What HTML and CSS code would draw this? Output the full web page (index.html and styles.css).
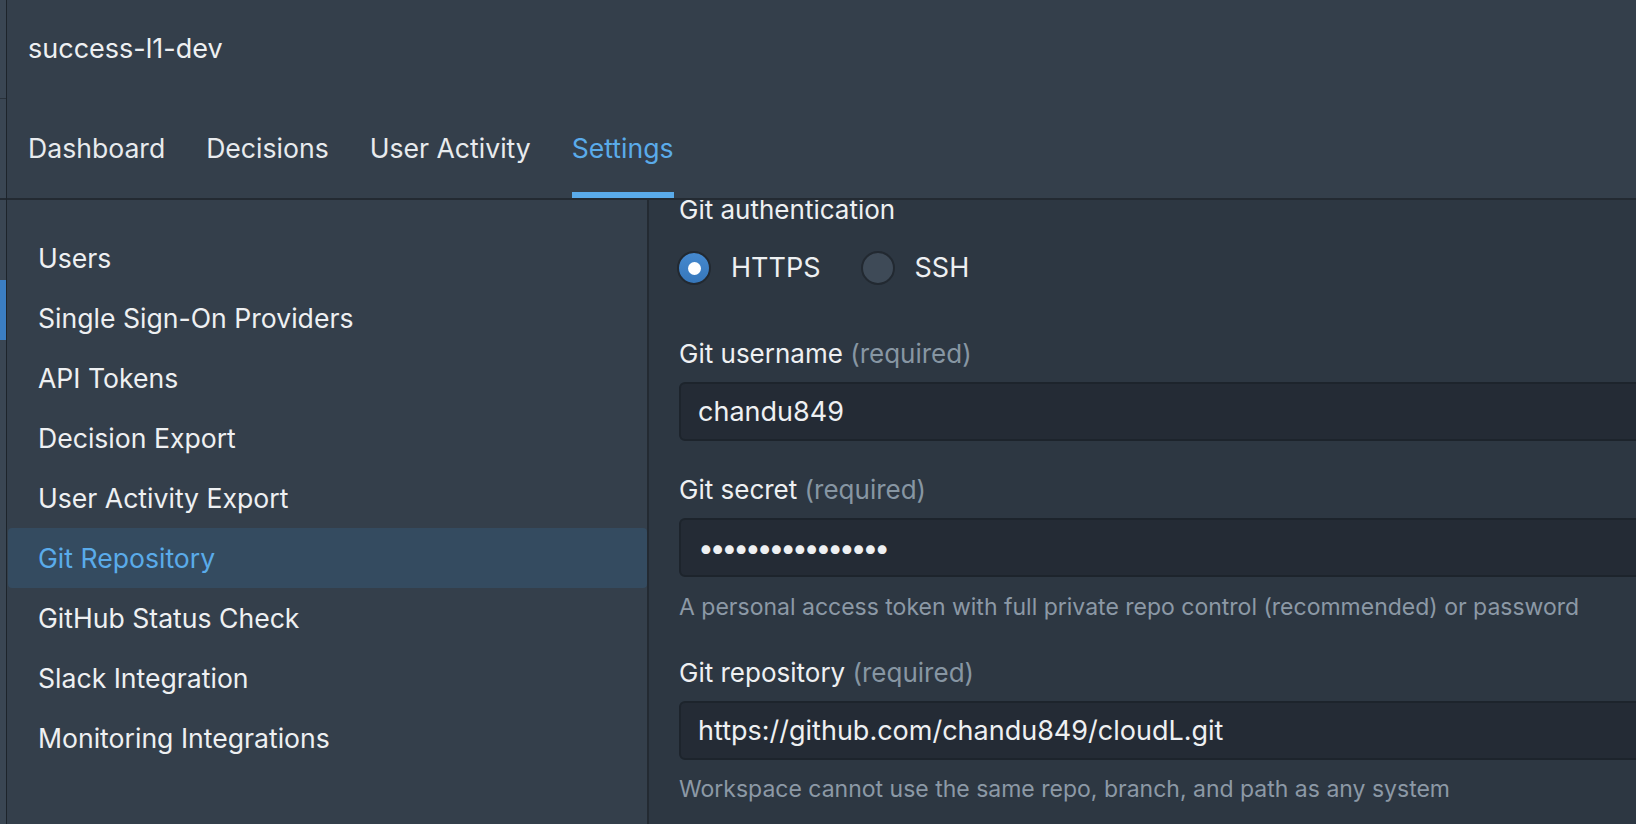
FILE: index.html
```html
<!DOCTYPE html>
<html lang="en">
<head>
<meta charset="utf-8">
<title>success-l1-dev · Settings</title>
<link rel="stylesheet" href="styles.css">
</head>
<body>
<div class="app">
  <div class="rail">
    <div class="rail-seg rail-top"></div>
    <div class="rail-seg rail-mid"></div>
    <div class="rail-gap"></div>
    <div class="rail-active"></div>
  </div>
  <div class="main">
    <header class="header">
      <div class="title">success-l1-dev</div>
      <nav class="tabs">
        <span class="tab">Dashboard</span>
        <span class="tab">Decisions</span>
        <span class="tab">User Activity</span>
        <span class="tab active">Settings</span>
      </nav>
    </header>
    <div class="body">
      <aside class="sidebar">
        <div class="item">Users</div>
        <div class="item">Single Sign-On Providers</div>
        <div class="item">API Tokens</div>
        <div class="item">Decision Export</div>
        <div class="item">User Activity Export</div>
        <div class="item selected">Git Repository</div>
        <div class="item">GitHub Status Check</div>
        <div class="item">Slack Integration</div>
        <div class="item">Monitoring Integrations</div>
      </aside>
      <section class="content">
        <div class="label first">Git authentication</div>
        <div class="radios">
          <label class="radio-opt"><span class="radio on"></span><span class="radio-text">HTTPS</span></label>
          <label class="radio-opt"><span class="radio"></span><span class="radio-text">SSH</span></label>
        </div>

        <div class="label l-user">Git username <span class="req">(required)</span></div>
        <div class="input">chandu849</div>

        <div class="label l-secret">Git secret <span class="req">(required)</span></div>
        <div class="input secret">••••••••••••••••</div>
        <div class="hint">A personal access token with full private repo control (recommended) or password</div>

        <div class="label l-repo">Git repository <span class="req">(required)</span></div>
        <div class="input">https://github.com/chandu849/cloudL.git</div>
        <div class="hint">Workspace cannot use the same repo, branch, and path as any system</div>
      </section>
    </div>
  </div>
</div>
</body>
</html>
```

FILE: styles.css
```css
* { box-sizing: border-box; }

html, body {
  margin: 0;
  padding: 0;
  height: 100%;
  overflow: hidden;
}

body {
  background: #2d3742;
  color: #e8ebee;
  font-family: "Inter", "Noto Sans", "DejaVu Sans", sans-serif;
}

.app {
  display: flex;
  height: 824px;
}

/* left rail of the neighbouring navigation */
.rail {
  width: 7px;
  flex: 0 0 7px;
  background: #3a4653;
  border-right: 1px solid #1d242b;
  display: flex;
  flex-direction: column;
}
.rail-seg { flex: 0 0 auto; }
.rail-top { height: 99px; border-bottom: 1px solid #29313a; }
.rail-mid { height: 101px; border-bottom: 2px solid #232a32; }
.rail-gap { height: 80px; }
.rail-active { height: 60px; background: #3b7ec2; }

.main {
  flex: 1;
  display: flex;
  flex-direction: column;
  min-width: 0;
}

/* header */
.header {
  height: 200px;
  flex: 0 0 200px;
  background: #343f4b;
  border-bottom: 2px solid #232a32;
  padding: 29px 0 0 21px;
  display: flex;
  flex-direction: column;
}
.title {
  font-size: 27px;
  line-height: 40px;
  color: #eef0f2;
}
.tabs {
  display: flex;
  gap: 41px;
  margin-top: 59px;
}
.tab {
  font-size: 26.6px;
  line-height: 40px;
  padding-bottom: 24px;
  border-bottom: 6px solid transparent;
  color: #e8ebee;
}
.tab.active {
  color: #5aabea;
  border-bottom-color: #5aabea;
}

/* body */
.body {
  flex: 1;
  display: flex;
  min-height: 0;
}

.sidebar {
  width: 642px;
  flex: 0 0 642px;
  background: #343f4b;
  border-right: 2px solid #232a32;
  padding: 28px 0 0 1px;
}
.item {
  height: 60px;
  display: flex;
  align-items: center;
  padding-left: 30px;
  font-size: 26.6px;
  color: #eef0f2;
  border-radius: 4px;
}
.item.selected {
  background: #344b60;
  color: #5aabea;
}

.content {
  flex: 1;
  padding-left: 30px;
  overflow: hidden;
  min-width: 0;
}

.label {
  font-size: 26px;
  line-height: 30px;
  color: #eef0f2;
  white-space: nowrap;
}
.label.first { margin-top: -5.5px; }
.req { color: #8796a3; }

.radios {
  display: flex;
  align-items: center;
  gap: 40px;
  margin-top: 26.5px;
  margin-left: -2px;
  height: 34px;
}
.radio-opt {
  display: flex;
  align-items: center;
  gap: 20px;
}
.radio {
  width: 34px;
  height: 34px;
  border-radius: 50%;
  border: 2px solid #222931;
  background: #3e4a57;
  display: flex;
  align-items: center;
  justify-content: center;
}
.radio.on {
  background: linear-gradient(#4589cf, #3677bb);
}
.radio.on::after {
  content: "";
  width: 13px;
  height: 13px;
  border-radius: 50%;
  background: #ffffff;
}
.radio-text {
  font-size: 27px;
  line-height: 34px;
  color: #eef0f2;
}

.l-user { margin-top: 53.5px; }
.l-secret { margin-top: 34.5px; }
.l-repo { margin-top: 37px; }

.input {
  margin-top: 13px;
  height: 59px;
  width: 1200px;
  background: #242b35;
  border: 2px solid #1d242c;
  border-radius: 6px;
  padding-left: 17px;
  display: flex;
  align-items: center;
  font-size: 27px;
  color: #eef0f2;
  white-space: nowrap;
}
.input.secret {
  font-size: 28px;
  letter-spacing: -4px;
}

.hint {
  margin-top: 15.5px;
  font-size: 23px;
  line-height: 28px;
  color: #8c99a6;
  white-space: nowrap;
}
```
